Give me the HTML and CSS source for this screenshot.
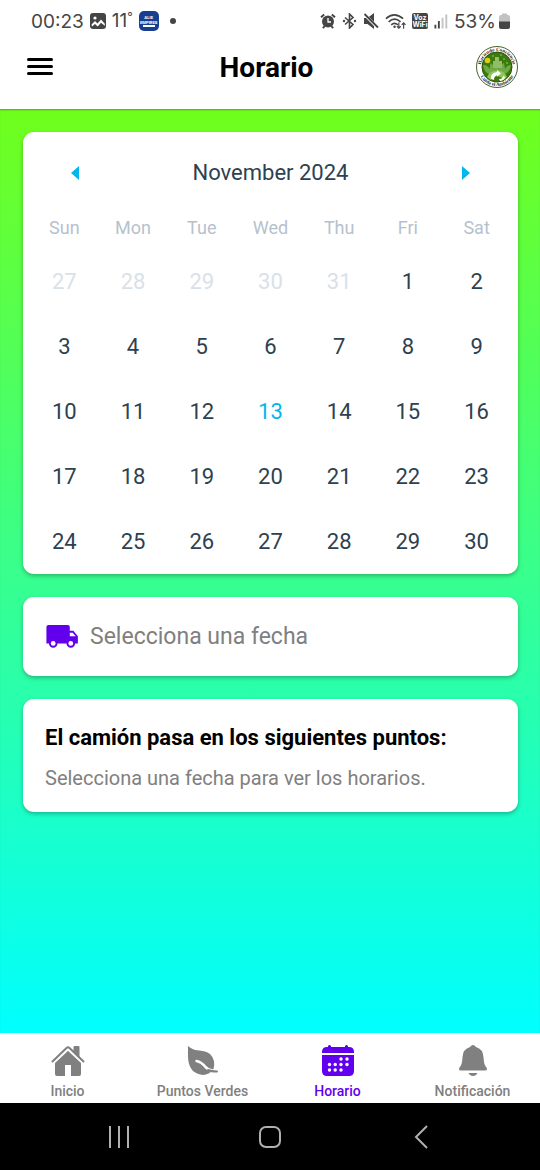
FILE: index.html
```html
<!DOCTYPE html>
<html lang="es">
<head>
<meta charset="utf-8">
<meta name="viewport" content="width=device-width, initial-scale=1">
<title>Horario</title>
<link rel="stylesheet" href="styles.css">
</head>
<body>
<div class="status">
  <div class="status-left">
    <span class="clock">00:23</span>
    <svg class="st-photo" width="16" height="16" viewBox="0 0 16 16" aria-hidden="true"><rect width="16" height="16" rx="3" fill="#454545"/><circle cx="5" cy="5" r="1.6" fill="#fff"/><path d="M1.5 11.5 5 8l2.5 2.5L11 6.5l3.8 4.2v2L11 9.8l-3.300 3.700L5 11l-3 2.500z" fill="#fff"/></svg>
    <span class="temp">11<sup>°</sup></span>
    <span class="st-app" aria-hidden="true"><span>ALIE</span><span>EMPIRES</span><i></i></span>
    <span class="st-dot"></span>
  </div>
  <div class="status-right">
    <svg width="16" height="16" viewBox="0 0 16 16" aria-hidden="true"><path d="M1 4.200 4.200 1.500M15 4.200 11.800 1.500" stroke="#454545" stroke-width="2"/><circle cx="8" cy="8.500" r="6" fill="#454545"/><path d="M4.500 13 3 15.200M11.500 13l1.500 2.200" stroke="#454545" stroke-width="2"/><path d="M8 5v4h3" fill="none" stroke="#fff" stroke-width="1.300"/></svg>
    <svg width="15" height="16" viewBox="0 0 15 16" aria-hidden="true"><path d="M3 4.500 11 11.500 7.500 15V1L11 4.500 3 11.500" fill="none" stroke="#454545" stroke-width="1.600"/><circle cx="2" cy="8" r="1.200" fill="#454545"/><circle cx="13" cy="8" r="1.200" fill="#454545"/></svg>
    <svg width="16" height="16" viewBox="0 0 16 16" aria-hidden="true"><path d="M1 5h3.500L11 0v16L4.500 11H1z" fill="#454545"/><path d="M0 0 15 15" stroke="#fff" stroke-width="3"/><path d="M1.500 1 15 14.500" stroke="#454545" stroke-width="1.800"/></svg>
    <svg width="21" height="17" viewBox="0 0 22 17" aria-hidden="true"><g fill="none" stroke="#454545" stroke-width="1.700"><path d="M1 5.500q8.500-8 18 0M3.800 8.800q6.200-5.500 12.500 0M6.500 12q3.500-3 7 0"/><path d="M14.500 9.500v6M12.500 13.500l2 2 2-2M19.500 16v-6M17.500 12l2-2 2 2" stroke-width="1.200"/></g><circle cx="10" cy="14" r="1.300" fill="#454545"/></svg>
    <span class="vowifi"><span>Voz</span><span>WiFi</span></span>
    <svg width="14" height="16" viewBox="0 0 15 16" aria-hidden="true"><path d="M1.500 16v-4M5.200 16V8" stroke="#454545" stroke-width="2"/><path d="M9.200 16V4.500M13.200 16V1" stroke="#c2c2c2" stroke-width="2"/></svg>
    <span class="percent">53%</span>
    <svg width="11" height="16" viewBox="0 0 11 16" aria-hidden="true"><path d="M3 2V.5h5V2h1q2 0 2 2v5H0V4q0-2 2-2z" fill="#c2c2c2"/><path d="M0 8.500h11V14q0 2-2 2H2q-2 0-2-2z" fill="#454545"/></svg>
  </div>
</div>

<header class="appbar">
  <button class="menu" type="button" aria-label="Menú"><i></i><i></i><i></i></button>
  <h1>Horario</h1>
  <svg class="logo" viewBox="0 0 42 42" role="img" aria-label="Haciendo Conciencia Cuida el Ambiente">
    <defs>
      <path id="arc-top" d="M5.500 25A16 16 0 1 1 36.500 25"/>
      <path id="arc-bottom" d="M2 21A19 19 0 0 0 40 21"/>
    </defs>
    <circle cx="21" cy="21" r="20.500" fill="#fff" stroke="#48652c" stroke-width="1"/>
    <circle cx="21" cy="21" r="15" fill="#3c7a0b" stroke="#28550c" stroke-width="1"/>
    <text class="logo-text"><textPath href="#arc-top" startOffset="50%" text-anchor="middle">Haciendo Conciencia</textPath></text>
    <text class="logo-text"><textPath href="#arc-bottom" startOffset="50%" text-anchor="middle">Cuida el Ambiente</textPath></text>
    <path d="M7 19q5 0 6.500 4l1-6q4 2 4 6l2.500-7 3 7q0-4 4-6l1 6q2-4 6-4-1 7-6 9H13q-5-2-6-9z" fill="#6faa46"/>
    <path d="M17 22v-7h2v-4h4v4h3v7z" fill="#8fbd6a"/>
    <path d="M11 31a11 11 0 0 1 20 0l-3.500 3a7.500 7.500 0 0 0-13 0z" fill="#90c65a"/>
    <path d="M15 33q-1-6 6-7v-2l4 3.500-4 3V29q-3 1-3 5zM23 33q4 0 4-3l2 1q0 3-5 4z" fill="#fff"/>
    <g fill="#a7cd83"><circle cx="17" cy="10" r=".8"/><circle cx="25" cy="9" r=".8"/><circle cx="28" cy="13" r=".8"/><circle cx="31" cy="17" r=".8"/><circle cx="20" cy="13" r=".8"/></g>
    <circle cx="11.500" cy="14.500" r="2.800" fill="#dccf1a"/>
  </svg>
</header>

<main class="content">
  <section class="card calendar">
    <div class="month">
      <button type="button" aria-label="Mes anterior"><svg width="8" height="14" viewBox="0 0 8 14"><path d="M8 0v14L0 7z" fill="#00b7ee"/></svg></button>
      <h2>November 2024</h2>
      <button type="button" aria-label="Mes siguiente"><svg width="8" height="14" viewBox="0 0 8 14"><path d="M0 0v14l8-7z" fill="#00b7ee"/></svg></button>
    </div>
    <table>
      <thead><tr><th scope="col">Sun</th><th scope="col">Mon</th><th scope="col">Tue</th><th scope="col">Wed</th><th scope="col">Thu</th><th scope="col">Fri</th><th scope="col">Sat</th></tr></thead>
      <tbody>
        <tr><td><button class="out">27</button></td><td><button class="out">28</button></td><td><button class="out">29</button></td><td><button class="out">30</button></td><td><button class="out">31</button></td><td><button>1</button></td><td><button>2</button></td></tr>
        <tr><td><button>3</button></td><td><button>4</button></td><td><button>5</button></td><td><button>6</button></td><td><button>7</button></td><td><button>8</button></td><td><button>9</button></td></tr>
        <tr><td><button>10</button></td><td><button>11</button></td><td><button>12</button></td><td><button class="today">13</button></td><td><button>14</button></td><td><button>15</button></td><td><button>16</button></td></tr>
        <tr><td><button>17</button></td><td><button>18</button></td><td><button>19</button></td><td><button>20</button></td><td><button>21</button></td><td><button>22</button></td><td><button>23</button></td></tr>
        <tr><td><button>24</button></td><td><button>25</button></td><td><button>26</button></td><td><button>27</button></td><td><button>28</button></td><td><button>29</button></td><td><button>30</button></td></tr>
      </tbody>
    </table>
  </section>

  <section class="card selected">
    <svg width="34" height="34" viewBox="0 0 24 24" aria-hidden="true"><path fill="#6200ee" fill-rule="evenodd" d="M2.500 3.500H16a1.500 1.500 0 0 1 1.500 1.500V7.500H20l3.200 4v5h-2a3 3 0 0 1-6 0H8.800a3 3 0 0 1-6 0H1V5A1.500 1.500 0 0 1 2.500 3.500zM17.500 9V11.500h4.200L19.500 9zM5.800 14.800a1.700 1.700 0 1 0 0 3.400 1.700 1.700 0 0 0 0-3.400zM18.200 14.800a1.700 1.700 0 1 0 0 3.400 1.700 1.700 0 0 0 0-3.400z"/></svg>
    <p>Selecciona una fecha</p>
  </section>

  <section class="card points">
    <h2>El camión pasa en los siguientes puntos:</h2>
    <p>Selecciona una fecha para ver los horarios.</p>
  </section>
</main>

<nav class="tabs">
  <a href="#inicio"><svg width="34" height="34" viewBox="0 0 34 34" aria-hidden="true"><path d="M4 18 17 6l13 12v12q0 2-2 2h-8V21h-6v11H6q-2 0-2-2z"/><path d="M1.500 18 17 3.500 32.500 18" fill="none" stroke="#fff" stroke-width="5"/><path d="M22.500 8V3q0-1 1-1H27.500q1 0 1 1v11z"/><path d="M1.500 17.500 15.500 4q1.500-1.500 3 0l14 13.500" fill="none" stroke="currentColor" stroke-width="2" stroke-linecap="round"/></svg>Inicio</a>
  <a href="#puntos"><svg width="34" height="34" viewBox="0 0 34 34" aria-hidden="true"><path d="M2 4Q1 1 4 3.500C9 8 18 5 24 10q6 6 3.500 15C22 33 13 32 7 27 1 21 2 11 2 4z"/><path d="M10.500 17q5 1 9 6 4 4 11.500 4.500" fill="none" stroke="#fff" stroke-width="2.500" stroke-linecap="round"/><path d="M22 26q3 1.500 9 1.500" fill="none" stroke="currentColor" stroke-width="2" stroke-linecap="round"/></svg>Puntos Verdes</a>
  <a class="active" href="#horario" aria-current="page"><svg width="34" height="34" viewBox="0 0 34 34" aria-hidden="true"><path d="M7 3V2q1.500-2 3 0v1h14V2q1.500-2 3 0v1h1q5 0 5 5v1H1V8q0-5 5-5zM1 11h32v16q0 5-5 5H6q-5 0-5-5z"/><g fill="#fff"><circle cx="20" cy="15" r="1.700"/><circle cx="26" cy="15" r="1.700"/><circle cx="8.500" cy="20.500" r="1.700"/><circle cx="14.200" cy="20.500" r="1.700"/><circle cx="20" cy="20.500" r="1.700"/><circle cx="26" cy="20.500" r="1.700"/><circle cx="8.500" cy="26" r="1.700"/><circle cx="14.200" cy="26" r="1.700"/><circle cx="20" cy="26" r="1.700"/></g></svg>Horario</a>
  <a href="#notificacion"><svg width="34" height="34" viewBox="0 0 34 34" aria-hidden="true"><path d="M14 3q3-4 6 0 7 2 7.500 10 .3 8 3 10.500 1.500 3-1.500 3H5q-3 0-1.500-3Q6.200 21 6.500 13 7 5 14 3zM12.500 29h9q-1.500 3-4.500 3t-4.500-3z"/></svg>Notificación</a>
</nav>

<div class="system">
  <button type="button" aria-label="Recientes"><svg width="24" height="24" viewBox="0 0 24 24"><path d="M3 1v22M12 1v22M21 1v22"/></svg></button>
  <button type="button" aria-label="Inicio del sistema"><svg width="24" height="24" viewBox="0 0 24 24"><rect x="2" y="2" width="20" height="20" rx="6"/></svg></button>
  <button type="button" aria-label="Atrás"><svg width="24" height="24" viewBox="0 0 24 24"><path d="M18 1 7 12l11 11"/></svg></button>
</div>
</body>
</html>
```

FILE: styles.css
```css
* { box-sizing: border-box; }
body {
  margin: 0;
  min-height: 100vh;
  display: flex;
  flex-direction: column;
  font-family: Roboto, "Noto Sans", sans-serif;
  background: #fff;
}
h1, h2, p { margin: 0; }
button {
  margin: 0;
  padding: 0;
  border: 0;
  background: none;
  color: inherit;
  font: inherit;
}
svg { display: block; flex: none; }

.status {
  height: 42px;
  padding: 0 30px 0 31px;
  display: flex;
  align-items: center;
  justify-content: space-between;
  color: #454545;
  font-family: Inter, Roboto, sans-serif;
  font-size: 19px;
}
.status-left, .status-right { display: flex; align-items: center; }
.status-left { gap: 6px; }
.status-right { gap: 6px; }
.temp { display: flex; line-height: 24px; }
.temp sup { font-size: 12px; line-height: 16px; }
.st-app {
  width: 20px;
  height: 20px;
  border-radius: 5px;
  background: #173f91;
  color: #fff;
  display: flex;
  flex-direction: column;
  align-items: center;
  justify-content: center;
  font-size: 4px;
  font-weight: 700;
  line-height: 5px;
}
.st-app i { width: 12px; height: 2px; background: #fff; }
.st-dot { width: 6px; height: 6px; margin-left: 5px; border-radius: 50%; background: #454545; }
.vowifi {
  width: 16px;
  height: 16px;
  border-radius: 2px;
  background: #454545;
  color: #fff;
  display: flex;
  flex-direction: column;
  align-items: center;
  justify-content: center;
  font-size: 7px;
  font-weight: 700;
  line-height: 7px;
}
.percent { margin-right: -3px; }

.appbar {
  height: 67px;
  padding: 0 22px 18px 27px;
  display: grid;
  grid-template-columns: 30px 1fr 42px;
  align-items: center;
}
.appbar h1 { padding-top: 2px; text-align: center; font-size: 28px; line-height: 32px; font-weight: 700; color: #000; }
.menu { width: 26px; height: 24px; display: flex; flex-direction: column; justify-content: center; gap: 4px; }
.menu i { height: 3px; border-radius: 2px; background: #000; }
.logo { width: 42px; height: 42px; }
.logo-text { font: 700 5px "Liberation Serif", serif; fill: #222; }

.content {
  flex: 1;
  padding: 23px 22px 23px 23px;
  display: flex;
  flex-direction: column;
  gap: 23px;
  background: linear-gradient(#70ff1c, #00ffff);
  box-shadow: inset 0 2px 2px -1px rgba(0, 0, 0, .35);
}
.card {
  background: #fff;
  border-radius: 11px;
  box-shadow: 0 2px 4px rgba(0, 0, 0, .28);
}

.calendar { padding: 7px 7px 0; color: #2d4150; }
.month { height: 67px; padding: 0 15px; display: flex; align-items: center; justify-content: space-between; }
.month h2 { font-size: 22px; line-height: 26px; font-weight: 400; }
.month button { width: 60px; height: 60px; display: grid; place-items: center; }
.calendar table { width: 100%; height: 368px; table-layout: fixed; border-collapse: collapse; }
.calendar th { height: 44px; padding: 0; font-size: 18px; line-height: 22px; font-weight: 400; color: #b6c1cd; }
.calendar td { height: 64px; padding: 0; text-align: center; vertical-align: middle; }
.calendar td button { width: 44px; height: 44px; font-size: 22px; line-height: 26px; }
.calendar td .out { color: #d9e1e8; }
.calendar td .today { color: #00b7ee; }

.selected { height: 79px; padding: 0 22px; display: flex; align-items: center; gap: 11px; color: gray; }
.selected p { font-size: 23px; line-height: 28px; }
.points { padding: 24px 22px 20px; }
.points h2 { font-size: 22px; line-height: 30px; font-weight: 700; color: #000; }
.points p { margin-top: 11px; font-size: 20px; line-height: 28px; color: gray; }

.tabs { height: 70px; display: grid; grid-template-columns: repeat(4, 1fr); background: #fff; }
.tabs a {
  padding-top: 11px;
  display: flex;
  flex-direction: column;
  align-items: center;
  gap: 4px;
  color: gray;
  font-size: 14px;
  line-height: 18px;
  font-weight: 500;
  text-decoration: none;
}
.tabs svg { fill: currentColor; }
.tabs .active { color: #6200ee; }

.system { height: 67px; padding: 0 44px; display: grid; grid-template-columns: repeat(3, 1fr); background: #000; }
.system button { display: grid; place-items: center; }
.system svg { fill: none; stroke: #b0b0b0; stroke-width: 2; }
```
